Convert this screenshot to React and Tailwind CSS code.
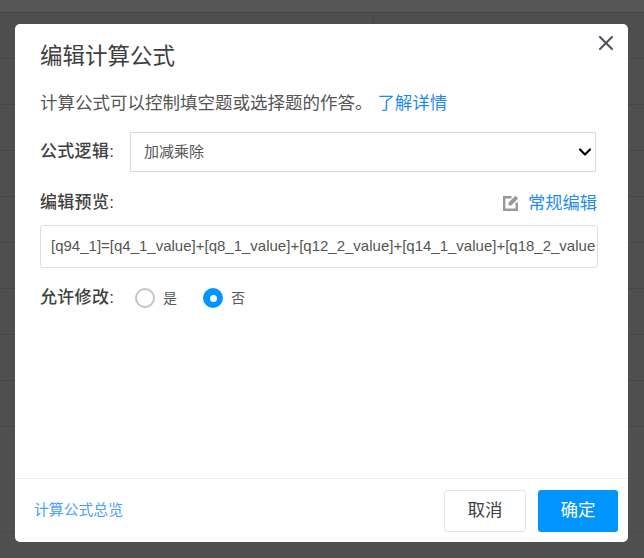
import { X, ChevronDown } from "lucide-react";

const FONT = "font-['Liberation_Sans','Noto_Sans_CJK_SC',sans-serif]";

function BackgroundRows() {
    const rows = [0, 1, 2, 3, 4, 5, 6, 7];
    return (
        <div className="flex flex-col">
            <div className="h-[13px] border-b border-[#464646] bg-[#555555]" />
            <div className="flex h-[46px] border-b border-[#464646] bg-[#4e4e4e]">
                <div className="w-[374px] border-r border-[#464646]" />
            </div>
            {rows.map((row) => (
                <div key={row} className="h-[46px] border-b border-[#464646] bg-[#4f4f4f]" />
            ))}
            <div className="h-[105px] border-b border-[#4a4a4a] bg-[#505050]" />
        </div>
    );
}

function EditIcon() {
    return (
        <svg width="16" height="16" viewBox="0 0 16 16" fill="none">
            <path d="M8.5 2.2H1.2v12.6h12.6V7.5" stroke="#999999" strokeWidth="2.4" />
            <path d="M12.4 0.8l2.8 2.8L8.2 10.6H5.4V7.8z" fill="#999999" />
        </svg>
    );
}

function Radio({ label, checked }) {
    return (
        <label className="flex items-center gap-[8px]">
            {checked ? (
                <span className="flex h-[20px] w-[20px] items-center justify-center rounded-full bg-[#0095ff]">
                    <span className="h-[7px] w-[7px] rounded-full bg-white" />
                </span>
            ) : (
                <span className="h-[20px] w-[20px] rounded-full border-2 border-[#c4c4c4] bg-white" />
            )}
            <span className="text-sm text-[#595959]">{label}</span>
        </label>
    );
}

export default function App() {
    return (
        <div className={`relative h-[558px] w-[644px] overflow-hidden bg-[#505050] ${FONT}`}>
            <BackgroundRows />
            <div className="absolute left-[15px] top-[24px] flex h-[518px] w-[613px] flex-col rounded-[5px] bg-white">
                <button className="absolute right-[10px] top-[7px] text-[#555560]">
                    <X size={24} strokeWidth={2.2} />
                </button>
                <div className="flex flex-1 flex-col px-[25px] pt-[18px]">
                    <h2 className="text-[22.5px] leading-[30px] font-normal text-[#404040]">编辑计算公式</h2>
                    <p className="mt-[19px] text-[17.5px] leading-[24px] text-[#555555]">
                        计算公式可以控制填空题或选择题的作答。 <a className="text-[#1f8ceb]">了解详情</a>
                    </p>
                    <div className="mt-[17px] flex items-center">
                        <span className="w-[90px] text-[17px] leading-[24px] font-medium tracking-[0.3px] text-[#404040]">公式逻辑:</span>
                        <div className="relative">
                            <select className="h-[40px] w-[466px] appearance-none border border-[#d9d9d9] bg-white pl-[13px] text-[15px] text-[#555555]">
                                <option>加减乘除</option>
                            </select>
                            <ChevronDown size={20} strokeWidth={2.6} className="absolute right-[1px] top-[10px] text-black" />
                        </div>
                    </div>
                    <div className="mt-[19px] flex items-center justify-between">
                        <span className="text-[17px] leading-[24px] font-medium tracking-[0.3px] text-[#404040]">编辑预览:</span>
                        <span className="mr-[6px] flex items-center gap-[9px] text-[17.25px] leading-[24px] text-[#1f8ceb]">
                            <EditIcon />
                            常规编辑
                        </span>
                    </div>
                    <div className="mt-[10px] flex h-[43px] w-[558px] items-center overflow-hidden rounded-[3px] border border-[#dddddd] pl-[10px] pr-[2px]">
                        <span className="text-[15px] whitespace-nowrap text-[#555555]">
                            [q94_1]=[q4_1_value]+[q8_1_value]+[q12_2_value]+[q14_1_value]+[q18_2_value
                        </span>
                    </div>
                    <div className="mt-[18px] flex items-center">
                        <span className="w-[95px] text-[17px] leading-[24px] font-medium tracking-[0.3px] text-[#404040]">允许修改:</span>
                        <div className="flex items-center gap-[26px]">
                            <Radio label="是" />
                            <Radio label="否" checked />
                        </div>
                    </div>
                </div>
                <div className="flex h-[64px] items-center justify-between border-t border-[#f0f0f0] pl-[19px] pr-[10px]">
                    <a className="text-[14.85px] text-[#4a9eff]">计算公式总览</a>
                    <div className="flex gap-[12px]">
                        <button className="h-[42px] w-[82px] rounded-[3px] border border-[#e5e5e5] bg-white text-[17.5px] text-[#404040]">取消</button>
                        <button className="h-[42px] w-[80px] rounded-[3px] bg-[#0095ff] text-[17.5px] text-white">确定</button>
                    </div>
                </div>
            </div>
        </div>
    );
}
